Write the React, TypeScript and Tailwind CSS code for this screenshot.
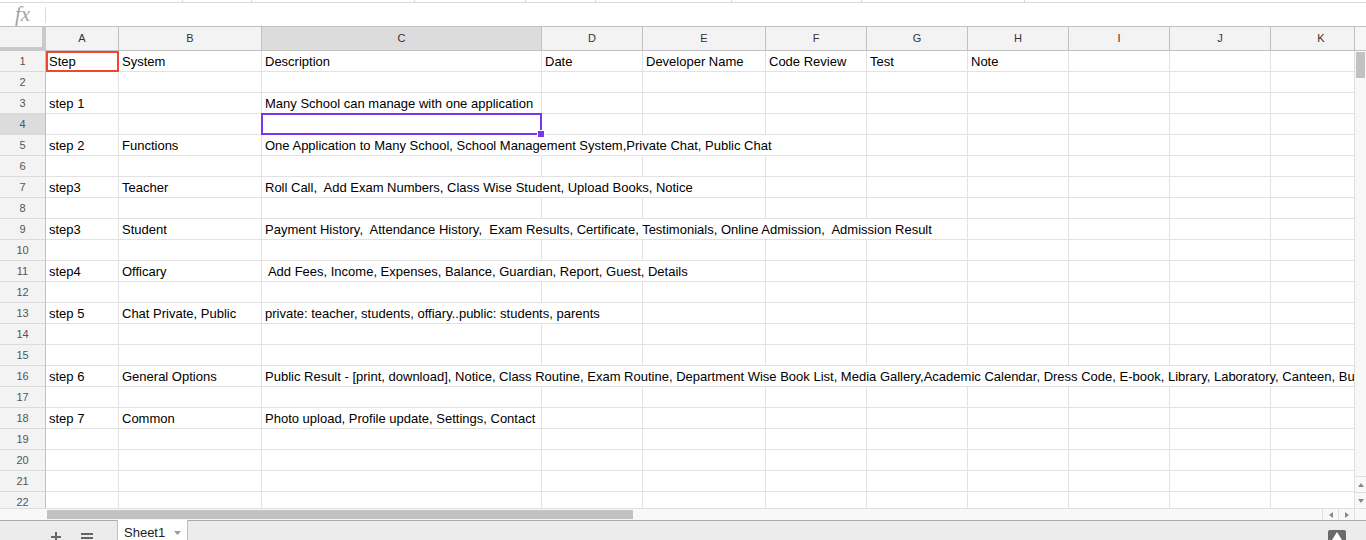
import React from "react";

const cols = [
  { l: "A", w: "w-[73px]" },
  { l: "B", w: "w-[143px]" },
  { l: "C", w: "w-[280px]" },
  { l: "D", w: "w-[101px]" },
  { l: "E", w: "w-[123px]" },
  { l: "F", w: "w-[101px]" },
  { l: "G", w: "w-[101px]" },
  { l: "H", w: "w-[101px]" },
  { l: "I", w: "w-[101px]" },
  { l: "J", w: "w-[101px]" },
  { l: "K", w: "w-[101px]" },
];

const data: Record<number, string[]> = {
  1: ["Step", "System", "Description", "Date", "Developer Name", "Code Review", "Test", "Note"],
  3: ["step 1", "", "Many School can manage with one application"],
  5: ["step 2", "Functions", "One Application to Many School, School Management System,Private Chat, Public Chat"],
  7: ["step3", "Teacher", "Roll Call,  Add Exam Numbers, Class Wise Student, Upload Books, Notice"],
  9: ["step3", "Student", "Payment History,  Attendance History,  Exam Results, Certificate, Testimonials, Online Admission,  Admission Result"],
  11: ["step4", "Officary", " Add Fees, Income, Expenses, Balance, Guardian, Report, Guest, Details"],
  13: ["step 5", "Chat Private, Public", "private: teacher, students, offiary..public: students, parents"],
  16: ["step 6", "General Options", "Public Result - [print, download], Notice, Class Routine, Exam Routine, Department Wise Book List, Media Gallery,Academic Calendar, Dress Code, E-book, Library, Laboratory, Canteen, Bus Route, Transport"],
  18: ["step 7", "Common", "Photo upload, Profile update, Settings, Contact"],
};

const ticks = ["w-[183px]", "w-[69px]", "w-[163px]", "w-[111px]", "w-[70px]", "w-[136px]", "w-[130px]", "w-[163px]"];

export default function App() {
  const rows = Array.from({ length: 22 }, (_, i) => i + 1);

  return (
    <div className="w-[1366px] h-[540px] overflow-hidden flex flex-col bg-white font-['Liberation_Sans',Arial,sans-serif] text-black">
      {/* toolbar remnant */}
      <div className="h-[3px] shrink-0 flex border-b border-[#dadada]">
        {ticks.map((t, i) => (
          <div key={i} className={`${t} h-full border-r border-[#dadada]`} />
        ))}
      </div>

      {/* formula bar */}
      <div className="h-[24px] shrink-0 flex items-center border-b border-[#c0c0c0]">
        <div className="w-[45px] flex items-center justify-center">
          <span className="font-['Liberation_Serif',serif] italic text-[21px] leading-none text-[#a3a3a3] -mt-[1px]">fx</span>
        </div>
        <div className="w-px h-[16px] bg-[#dadada]" />
      </div>

      {/* column headers */}
      <div className="h-[24px] shrink-0 flex">
        <div className="w-[1354px] overflow-hidden flex">
          <div className="w-[46px] shrink-0 h-full bg-[#f3f3f3] border-r-4 border-b-4 border-[#c9c9c9]" />
          {cols.map((c) => (
            <div
              key={c.l}
              className={`${c.w} shrink-0 h-full flex items-center justify-center text-[11px] text-[#333] border-r border-b border-[#c0c0c0] ${c.l === "C" ? "bg-[#dcdcdc]" : "bg-[#f3f3f3]"}`}
            >
              {c.l}
            </div>
          ))}
        </div>
        <div className="w-[12px] h-full bg-[#f6f6f6] border-l border-b border-[#c0c0c0]" />
      </div>

      {/* body */}
      <div className="flex-1 min-h-0 flex">
        <div className="w-[1354px] overflow-hidden relative">
          {rows.map((r) => {
            const vals = data[r] || [];
            return (
              <div key={r} className="h-[21px] flex">
                <div
                  className={`w-[46px] shrink-0 h-full flex items-center justify-center text-[11px] text-[#555] border-r border-b border-r-[#c0c0c0] border-b-[#dadada] ${r === 4 ? "bg-[#dcdcdc]" : "bg-[#f3f3f3]"}`}
                >
                  {r}
                </div>
                {cols.map((c, ci) => (
                  <div key={c.l} className={`${c.w} shrink-0 h-full flex items-start border-r border-b border-[#e2e2e2] pl-[3px]`}>
                    {vals[ci] ? (
                      <span className="relative z-10 block shrink-0 h-[20px] pt-px leading-[19px] text-[13px] whitespace-pre bg-white pr-[3px]">
                        {vals[ci]}
                      </span>
                    ) : null}
                  </div>
                ))}
              </div>
            );
          })}

          {/* collaborator cursor on A1 */}
          <div className="absolute z-20 left-[46px] top-0 w-[73px] h-[21px] border-2 border-[#ee4630]" />
          {/* active selection on C4 */}
          <div className="absolute z-20 left-[261px] top-[62px] w-[281px] h-[22px] border-2 border-[#7a35f2]" />
          <div className="absolute z-30 left-[537px] top-[79px] w-[8px] h-[8px] bg-[#7a35f2] border border-white" />
        </div>

        {/* vertical scrollbar */}
        <div className="w-[12px] h-full flex flex-col bg-[#f8f8f8] border-l border-[#dedede]">
          <div className="mt-[1px] ml-[1px] w-[9px] h-[26px] bg-[#c2c2c2]" />
          <div className="flex-1" />
          <div className="h-[16px] border-t border-[#e0e0e0] flex items-center justify-center">
            <svg width="6" height="4" viewBox="0 0 6 4"><polygon points="3,0 6,4 0,4" fill="#8a8a8a" /></svg>
          </div>
          <div className="h-[16px] border-t border-[#e0e0e0] flex items-center justify-center">
            <svg width="6" height="4" viewBox="0 0 6 4"><polygon points="0,0 6,0 3,4" fill="#8a8a8a" /></svg>
          </div>
        </div>
      </div>

      {/* horizontal scrollbar */}
      <div className="h-[12px] shrink-0 flex bg-[#f8f8f8] border-t border-[#e0e0e0]">
        <div className="w-[46px] shrink-0" />
        <div className="flex-1">
          <div className="ml-[1px] mt-[1px] w-[586px] h-[9px] bg-[#c2c2c2]" />
        </div>
        <div className="w-[16px] border-l border-[#e0e0e0] flex items-center justify-center">
          <svg width="4" height="6" viewBox="0 0 4 6"><polygon points="4,0 4,6 0,3" fill="#8a8a8a" /></svg>
        </div>
        <div className="w-[16px] border-l border-[#e0e0e0] flex items-center justify-center">
          <svg width="4" height="6" viewBox="0 0 4 6"><polygon points="0,0 4,3 0,6" fill="#8a8a8a" /></svg>
        </div>
        <div className="w-[12px] border-l border-[#e0e0e0]" />
      </div>

      {/* sheet tabs bar */}
      <div className="h-[20px] shrink-0 flex bg-[#ececec] border-t border-[#ababab]">
        <svg className="ml-[51px] mt-[11px]" width="10" height="10" viewBox="0 0 10 10">
          <rect x="4" y="0" width="2" height="10" fill="#666" />
          <rect x="0" y="4" width="10" height="2" fill="#666" />
        </svg>
        <svg className="ml-[20px] mt-[12px]" width="12" height="10" viewBox="0 0 12 10">
          <rect x="0" y="0" width="12" height="2" fill="#666" />
          <rect x="0" y="4" width="12" height="2" fill="#666" />
          <rect x="0" y="8" width="12" height="2" fill="#666" />
        </svg>
        <div className="ml-[24px] -mt-px w-[71px] h-[21px] bg-white border-x border-[#c0c0c0] flex items-center pl-[6px] pt-[4px]">
          <span className="text-[13px] text-[#222]">Sheet1</span>
          <svg className="ml-[9px]" width="7" height="4" viewBox="0 0 7 4"><polygon points="0,0 7,0 3.5,4" fill="#9a9a9a" /></svg>
        </div>
        <div className="ml-auto mr-[20px] mt-[9px] w-[18px] h-[14px] bg-[#6a6a6a] rounded-[2px] flex justify-center pt-[2px]">
          <svg width="10" height="8" viewBox="0 0 10 8"><polygon points="5,0 10,8 0,8" fill="#fff" /></svg>
        </div>
      </div>
    </div>
  );
}
